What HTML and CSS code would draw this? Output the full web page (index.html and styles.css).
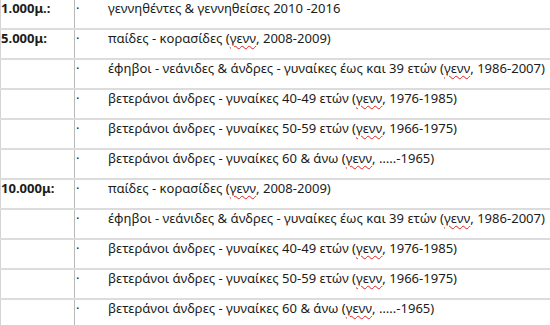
FILE: index.html
```html
<!DOCTYPE html>
<html lang="el">

<head>
    <meta charset="UTF-8">
    <meta name="viewport" content="width=device-width, initial-scale=1.0">
    <title>Κατηγορίες</title>
    <link rel="stylesheet" href="styles.css">
</head>

<body>

    <!-- Race categories table -->
    <div class="sheet">
        <div class="row">
            <div class="label">1.000μ.:</div>
            <div class="item"><span class="dot">·</span>γεννηθέντες &amp; γεννηθείσες 2010 -2016</div>
        </div>
        <div class="row">
            <div class="label">5.000μ:</div>
            <div class="item"><span class="dot">·</span>παίδες - κορασίδες (<span class="sp">γενν</span>, 2008-2009)</div>
        </div>
        <div class="row">
            <div class="label"></div>
            <div class="item"><span class="dot">·</span>έφηβοι - νεάνιδες &amp; άνδρες - γυναίκες έως και 39 ετών (<span class="sp">γενν</span>, 1986-2007)</div>
        </div>
        <div class="row">
            <div class="label"></div>
            <div class="item"><span class="dot">·</span>βετεράνοι άνδρες - γυναίκες 40-49 ετών (<span class="sp">γενν</span>, 1976-1985)</div>
        </div>
        <div class="row">
            <div class="label"></div>
            <div class="item"><span class="dot">·</span>βετεράνοι άνδρες - γυναίκες 50-59 ετών (<span class="sp">γενν</span>, 1966-1975)</div>
        </div>
        <div class="row">
            <div class="label"></div>
            <div class="item"><span class="dot">·</span>βετεράνοι άνδρες - γυναίκες 60 &amp; άνω (<span class="sp">γενν</span>, …..-1965)</div>
        </div>
        <div class="row">
            <div class="label">10.000μ:</div>
            <div class="item"><span class="dot">·</span>παίδες - κορασίδες (<span class="sp">γενν</span>, 2008-2009)</div>
        </div>
        <div class="row">
            <div class="label"></div>
            <div class="item"><span class="dot">·</span>έφηβοι - νεάνιδες &amp; άνδρες - γυναίκες έως και 39 ετών (<span class="sp">γενν</span>, 1986-2007)</div>
        </div>
        <div class="row">
            <div class="label"></div>
            <div class="item"><span class="dot">·</span>βετεράνοι άνδρες - γυναίκες 40-49 ετών (<span class="sp">γενν</span>, 1976-1985)</div>
        </div>
        <div class="row">
            <div class="label"></div>
            <div class="item"><span class="dot">·</span>βετεράνοι άνδρες - γυναίκες 50-59 ετών (<span class="sp">γενν</span>, 1966-1975)</div>
        </div>
        <div class="row">
            <div class="label"></div>
            <div class="item"><span class="dot">·</span>βετεράνοι άνδρες - γυναίκες 60 &amp; άνω (<span class="sp">γενν</span>, …..-1965)</div>
        </div>
    </div>

</body>

</html>
```

FILE: styles.css
```css
/* Basic page */
body {
    margin: 0;
    padding: 0;
    background-color: white;
    font-family: "Noto Sans", "DejaVu Sans", sans-serif;
    font-size: 13.05px;
    line-height: 14px;
    color: #1c1c1c;
}

/* Table rows */
.sheet {
    display: flex;
    flex-direction: column;
}

.row {
    display: grid;
    grid-template-columns: 75px 1fr;
    height: 30px;
    box-sizing: border-box;
    border-bottom: 2px solid #dcdcdc;
    white-space: nowrap;
}

.label {
    border-left: 1px solid #d4d4d4;
    border-right: 1px solid #b8b8b8;
    padding-top: 1px;
    font-weight: bold;
}

.item {
    display: flex;
    padding-left: 1px;
    padding-top: 1px;
}

.dot {
    width: 32px;
    flex-shrink: 0;
}

/* Spell-check squiggle */
.sp {
    text-decoration: underline wavy #e02020;
    text-decoration-thickness: 1px;
    text-underline-offset: 2px;
}
```
